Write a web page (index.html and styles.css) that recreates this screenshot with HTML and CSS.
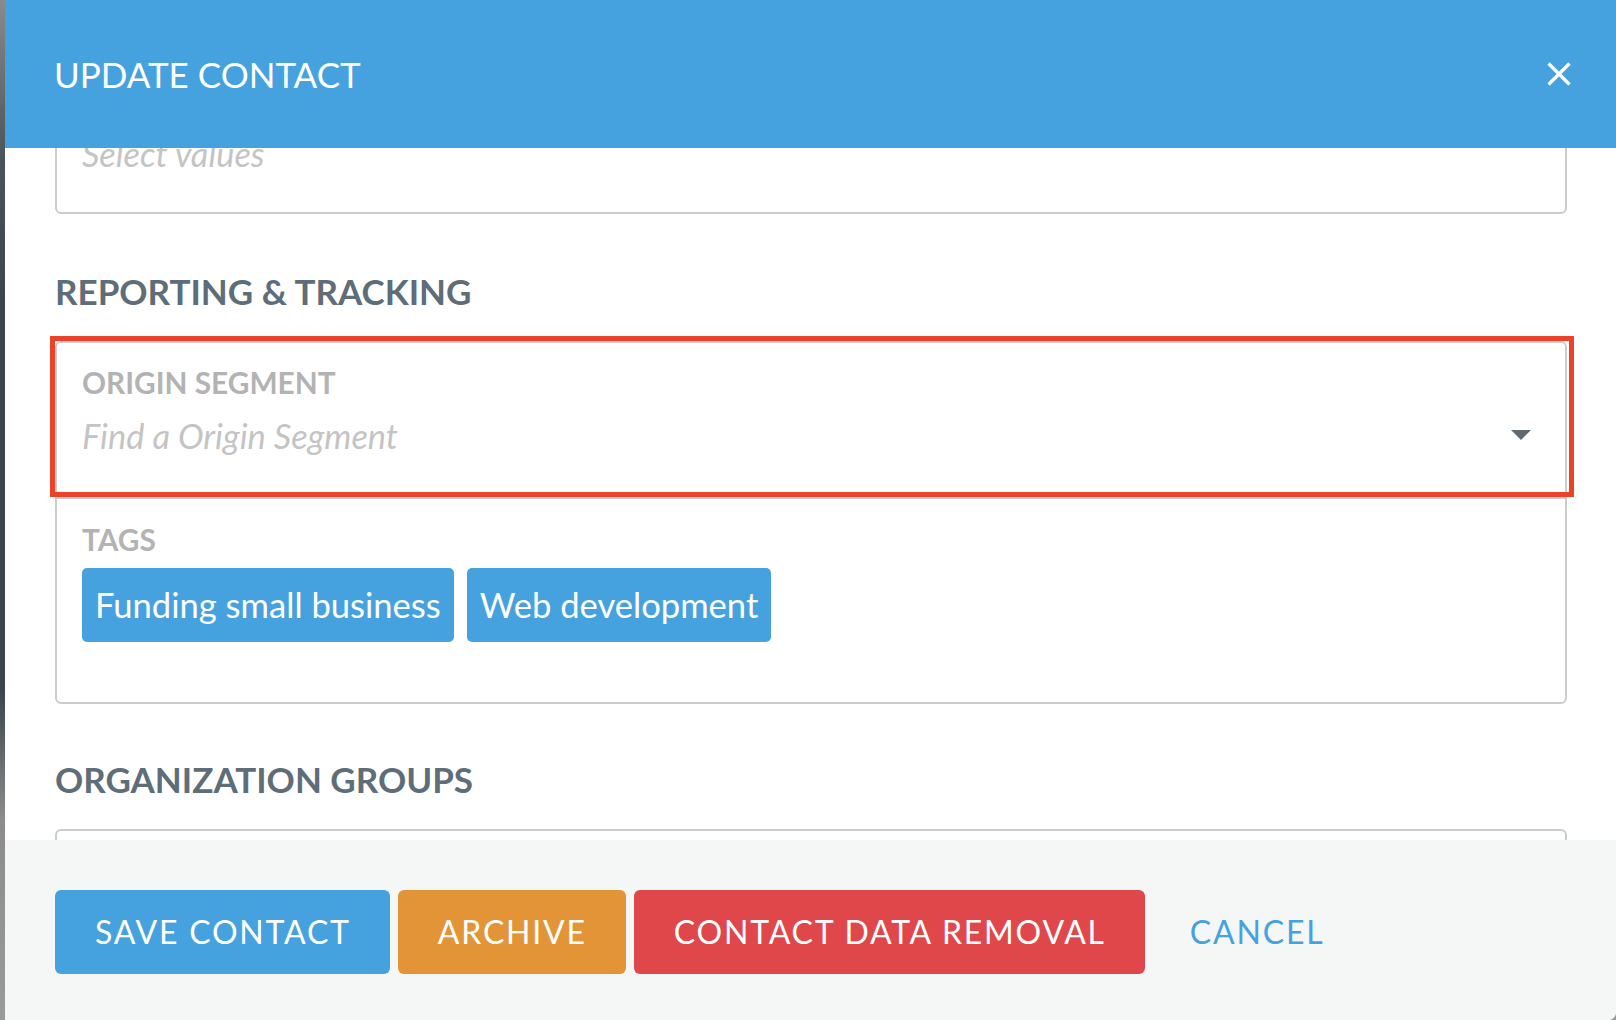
FILE: index.html
```html
<!DOCTYPE html>
<html lang="en">
<head>
<meta charset="utf-8">
<title>Update Contact</title>
<link rel="stylesheet" href="styles.css">
</head>
<body>
<div class="modal">
  <header class="modal-header">
    <h1 class="modal-title">UPDATE CONTACT</h1>
    <button class="close-btn" aria-label="Close">
      <svg width="24" height="24" viewBox="0 0 24 24"><path d="M1.5 1.5 L22.5 22.5 M22.5 1.5 L1.5 22.5" stroke="#ffffff" stroke-width="3.2" fill="none"/></svg>
    </button>
  </header>
  <div class="modal-body">
    <div class="scroll-content">
      <div class="field-box first-box">
        <div class="placeholder">Select values</div>
      </div>

      <h2 class="section-heading">REPORTING &amp; TRACKING</h2>
      <div class="field-group">
        <div class="field highlighted">
          <div class="field-label">ORIGIN SEGMENT</div>
          <div class="select-row">
            <div class="placeholder">Find a Origin Segment</div>
            <span class="caret"></span>
          </div>
          <span class="annotation"></span>
        </div>
        <div class="field tags-field">
          <div class="field-label">TAGS</div>
          <div class="chips">
            <span class="chip">Funding small business</span>
            <span class="chip">Web development</span>
          </div>
        </div>
      </div>

      <h2 class="section-heading org-heading">ORGANIZATION GROUPS</h2>
      <div class="field-box org-box"></div>
    </div>
  </div>
  <footer class="modal-footer">
    <button class="btn btn-save">SAVE CONTACT</button>
    <button class="btn btn-archive">ARCHIVE</button>
    <button class="btn btn-remove">CONTACT DATA REMOVAL</button>
    <button class="btn btn-cancel">CANCEL</button>
  </footer>
</div>
</body>
</html>
```
FILE: styles.css
```css
* { box-sizing: border-box; }
html, body { margin: 0; padding: 0; }
body {
  width: 1616px;
  height: 1020px;
  overflow: hidden;
  font-family: Lato, "Open Sans", sans-serif;
  background: linear-gradient(to bottom, #8a8a8a 0px, #4a545a 160px, #3a454c 300px, #3a454c 690px, #8c8c8c 820px, #9a9a9a 1020px);
}
.modal {
  margin-left: 5px;
  width: 1611px;
  height: 1020px;
  display: flex;
  flex-direction: column;
  background: #ffffff;
  border-bottom-right-radius: 8px;
  overflow: hidden;
}
.modal-header {
  flex: 0 0 148px;
  height: 148px;
  background: #46a2de;
  display: flex;
  align-items: center;
  justify-content: space-between;
  padding: 0 45px 0 49px;
  position: relative;
  z-index: 2;
}
.modal-title {
  margin: 0;
  font-size: 35px;
  font-weight: 400;
  line-height: 1.2;
  color: #ffffff;
}
.close-btn {
  background: none;
  border: 0;
  padding: 0;
  width: 24px;
  height: 24px;
  display: flex;
  cursor: pointer;
}
.modal-body {
  flex: 1 1 auto;
  overflow: hidden;
  padding: 0 49px 0 50px;
}
.scroll-content { display: flex; flex-direction: column; }
.field-box {
  border: 2px solid #cccccc;
  border-radius: 6px;
}
.first-box {
  margin-top: -44px;
  height: 110px;
  padding: 27px 25px 0;
}
.placeholder {
  font-size: 34.4px;
  font-style: italic;
  line-height: 1.2;
  color: #c4c4c4;
}
.section-heading {
  margin: 56px 0 29px;
  font-size: 35px;
  font-weight: 700;
  line-height: 1.2;
  color: #5e6d77;
}
.org-heading { margin: 54px 0 29px; }
.field-group {
  border: 2px solid #cccccc;
  border-radius: 6px;
}
.field {
  padding: 22px 34px 41px 25px;
  position: relative;
}
.field-label {
  font-size: 29.8px;
  font-weight: 700;
  line-height: 1.2;
  color: #b3b3b3;
}
.select-row {
  margin-top: 14px;
  display: flex;
  align-items: center;
  justify-content: space-between;
}
.caret {
  width: 0;
  height: 0;
  border-left: 10px solid transparent;
  border-right: 10px solid transparent;
  border-top: 10px solid #5f6b73;
}
.annotation {
  position: absolute;
  top: -7px;
  left: -7px;
  right: -9px;
  bottom: 0;
  border: 5px solid #ea4329;
  pointer-events: none;
}
.tags-field {
  border-top: 2px solid #cccccc;
  padding: 23px 25px 60px;
}
.chips {
  margin-top: 10px;
  display: flex;
  gap: 13px;
}
.chip {
  background: #46a2de;
  color: #ffffff;
  font-size: 34.6px;
  line-height: 1.2;
  padding: 16px 13px 17px;
  border-radius: 5px;
}
.org-box { height: 120px; flex: 0 0 auto; }
.modal-footer {
  flex: 0 0 180px;
  height: 180px;
  background: #f5f7f7;
  display: flex;
  align-items: flex-start;
  gap: 8px;
  padding: 50px 0 0 50px;
}
.btn {
  font-family: Lato, "Open Sans", sans-serif;
  font-size: 32px;
  font-weight: 400;
  letter-spacing: 1.8px;
  line-height: 1.2;
  color: #ffffff;
  border: 0;
  border-radius: 6px;
  padding: 23px 39px 23px 40px;
  cursor: pointer;
}
.btn-save { background: #46a2de; }
.btn-archive { background: #e39436; }
.btn-remove { background: #e0474a; }
.btn-cancel {
  background: transparent;
  color: #46a2de;
  padding-left: 37px;
}
```
